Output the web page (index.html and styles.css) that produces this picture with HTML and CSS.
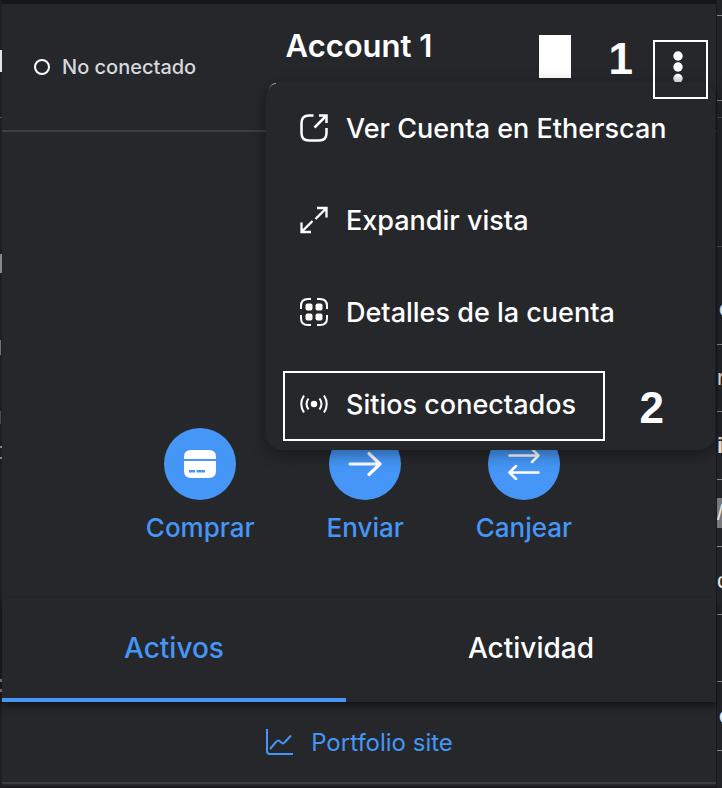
FILE: index.html
```html
<!DOCTYPE html>
<html lang="es">
<head>
<meta charset="utf-8">
<meta name="viewport" content="width=device-width, initial-scale=1">
<title>Account 1</title>
<link rel="stylesheet" href="styles.css">
</head>
<body>
<div class="page">
  <div class="edge-left"></div>
  <main class="wallet">
    <header class="header">
      <div class="status"><span class="ring"></span>No conectado</div>
      <h1 class="account">Account 1</h1>
      <div class="tools">
        <span class="blank"></span>
        <span class="step">1</span>
        <button class="more" type="button" aria-label="Opciones de la cuenta">
          <svg width="10" height="32" viewBox="0 0 10 32"><defs><linearGradient id="shade" x1="0" y1="0" x2="0" y2="1"><stop offset="0" stop-color="#fff"/><stop offset="1" stop-color="#c8c8c8"/></linearGradient></defs><g fill="#fff"><circle cx="5" cy="5" r="4.700"/><circle cx="5" cy="16" r="4.700"/></g><path fill="url(#shade)" d="M2 31A4.700 4.700 0 1 1 8 31Z"/></svg>
        </button>
      </div>
    </header>

    <nav class="menu">
      <button class="item" type="button">
        <svg class="icon" viewBox="0 0 28 28" fill="none" stroke="#fff" stroke-width="2.500"><path d="M13.500 1.500H9Q1.500 1.500 1.500 9V19Q1.500 26.500 9 26.500H19Q26.500 26.500 26.500 19V14M19 1.500H26.500V9M26 2L14.500 13.500"/></svg>
        Ver Cuenta en Etherscan
      </button>
      <button class="item" type="button">
        <svg class="icon" viewBox="0 0 28 28" fill="none" stroke="#fff" stroke-width="2.300"><path d="M17 2H26.500V11.500M26 2.500L15.500 13M11 26H1.500V16.500M2 25.500L12.500 15"/></svg>
        Expandir vista
      </button>
      <button class="item" type="button">
        <svg class="icon" viewBox="0 0 28 28" fill="none" stroke="#fff" stroke-width="2"><path d="M1 11V8Q1 1 8 1H11M17 1H20Q27 1 27 8V11M27 17V20Q27 27 20 27H17M11 27H8Q1 27 1 20V17"/><g fill="#fff" stroke="none"><rect x="5.500" y="5.500" width="7" height="7" rx="2"/><rect x="15.500" y="5.500" width="7" height="7" rx="2"/><rect x="5.500" y="15.500" width="7" height="7" rx="2"/><rect x="15.500" y="15.500" width="7" height="7" rx="2"/></g></svg>
        Detalles de la cuenta
      </button>
      <button class="item" type="button">
        <svg class="icon" viewBox="0 0 28 28" fill="none" stroke="#fff" stroke-width="2"><circle cx="14" cy="14" r="3.200" fill="#fff" stroke="none"/><path d="M8.500 8.500Q4.500 14 8.500 19.500M19.500 8.500Q23.500 14 19.500 19.500M4 5.500Q-1.500 14 4 22.500M24 5.500Q29.500 14 24 22.500"/></svg>
        Sitios conectados
      </button>
      <div class="highlight"></div>
      <span class="step step-two">2</span>
    </nav>

    <section class="overview">
      <div class="actions">
        <button class="action" type="button">
          <span class="disc"><svg width="32" height="28" viewBox="0 0 32 28" fill="#fff"><path d="M0 9V7Q0 0 7 0H25Q32 0 32 7V9Z"/><path fill-rule="evenodd" d="M0 11H32V21Q32 28 25 28H7Q0 28 0 21ZM5 20V22.500H11V20ZM12.500 20V22.500H21V20Z"/></svg></span>
          Comprar
        </button>
        <button class="action" type="button">
          <span class="disc"><svg width="34" height="26" viewBox="0 0 34 26" fill="none" stroke="#fff" stroke-width="3.200" stroke-linecap="round" stroke-linejoin="round"><path d="M2 13H32M21 2.500L32 13L21 23.500"/></svg></span>
          Enviar
        </button>
        <button class="action" type="button">
          <span class="disc"><svg width="32" height="32" viewBox="0 0 32 32" fill="none" stroke="#fff" stroke-width="2.500" stroke-linecap="round" stroke-linejoin="round"><path d="M1.500 7.500H30.500M24 1L30.500 7.500L24 14M30.500 24.500H1.500M8 18L1.500 24.500L8 31"/></svg></span>
          Canjear
        </button>
      </div>
    </section>

    <div class="tabs" role="tablist">
      <button class="tab active" type="button" role="tab" aria-selected="true">Activos</button>
      <button class="tab" type="button" role="tab" aria-selected="false">Actividad</button>
    </div>

    <footer class="footer">
      <a class="portfolio" href="#"><svg width="28" height="28" viewBox="0 0 28 28" fill="none" stroke="#4596f6" stroke-width="2"><path d="M2 1V23Q2 26 5 26H28M5 21L11 14Q13 11.500 15 13.500L17 15Q18.500 16 20 14L26 7.500"/></svg>Portfolio site</a>
    </footer>
  </main>
  <aside class="edge-right" aria-hidden="true">
    <div class="row r16"></div>
    <div class="row r85"></div>
    <div class="row r17 dim"></div>
    <div class="row r129 dim"></div>
    <div class="row r98 inset"><b>c</b></div>
    <div class="row r67">r</div>
    <div class="row r68"><b>i</b></div>
    <div class="row r67"><span class="chip">/</span></div>
    <div class="row r68">c</div>
    <div class="row r67"></div>
    <div class="row r69 inset"><b>c</b></div>
  </aside>
</div>
</body>
</html>
```
FILE: styles.css
```css
* {
  box-sizing: border-box;
}

body {
  margin: 0;
  background: #1d1e21;
  color: #fff;
  font-family: Inter, "Liberation Sans", sans-serif;
}

button {
  margin: 0;
  padding: 0;
  border: 0;
  background: none;
  color: inherit;
  font: inherit;
}

.page {
  display: grid;
  grid-template-columns: 2px minmax(0, 1fr) 6px;
  min-height: 100vh;
}

.edge-left {
  background:
    linear-gradient(#e4e4e4, #e4e4e4) 0 50px / 2px 22px no-repeat,
    linear-gradient(#55585c, #55585c) 0 117px / 2px 1px no-repeat,
    linear-gradient(#86888a, #86888a) 0 254px / 2px 19px no-repeat,
    linear-gradient(#707274, #707274) 0 340px / 1px 15px no-repeat,
    linear-gradient(#4c4e50, #4c4e50) 0 411px / 1px 13px no-repeat,
    linear-gradient(#86888a, #86888a) 0 446px / 2px 2px no-repeat,
    linear-gradient(#86888a, #86888a) 0 457px / 2px 2px no-repeat,
    linear-gradient(#86888a, #86888a) 0 679px / 2px 3px no-repeat,
    linear-gradient(#86888a, #86888a) 0 689px / 2px 3px no-repeat;
}

.wallet {
  position: relative;
  display: flex;
  flex-direction: column;
  border-top: 4px solid #151618;
  border-bottom: 2px solid #1b1b1f;
  background: #26272b;
}

.header {
  display: grid;
  grid-template-columns: 1fr auto 1fr;
  min-height: 128px;
  border-bottom: 2px solid #3b3e43;
}

.status {
  display: flex;
  align-items: center;
  gap: 12px;
  padding-left: 32px;
  color: #d6d9dc;
  font-size: 20px;
  font-weight: 500;
}

.ring {
  width: 16px;
  height: 16px;
  border: 2px solid #fff;
  border-radius: 50%;
}

.account {
  margin: 22px 0 0;
  font-size: 31px;
  line-height: 40px;
  font-weight: 600;
}

.tools {
  display: flex;
  justify-content: flex-end;
  align-items: flex-start;
  padding: 31px 8px 0 0;
}

.blank {
  width: 32px;
  height: 43px;
  margin-right: 38px;
  background: #fff;
}

.step {
  font: bold 44px/48px "Liberation Sans", sans-serif;
}

.more {
  position: relative;
  z-index: 3;
  display: flex;
  align-items: flex-start;
  width: 55px;
  height: 59px;
  margin: 5px 0 0 20px;
  padding: 9px 0 0 18px;
  border: 2px solid #fff;
}

.menu {
  position: absolute;
  z-index: 2;
  top: 78px;
  right: 1px;
  width: 449px;
  border-radius: 16px;
  background: #26272b;
  box-shadow: 0 4px 16px rgba(0, 0, 0, 0.4);
}

.menu::before {
  content: "";
  position: absolute;
  top: 1px;
  left: 3px;
  width: 7px;
  height: 7px;
  border-top: 1px solid #a0a1a3;
  border-top-left-radius: 7px;
}

.item {
  display: flex;
  align-items: center;
  gap: 18px;
  width: 100%;
  height: 92px;
  padding-left: 34px;
  font-size: 27px;
  font-weight: 500;
  text-align: left;
  white-space: nowrap;
}

.icon {
  flex: none;
  width: 28px;
  height: 28px;
}

.highlight {
  position: absolute;
  left: 17px;
  bottom: 9px;
  width: 322px;
  height: 70px;
  border: 2px solid #fff;
}

.step-two {
  position: absolute;
  right: 51px;
  bottom: 18px;
}

.overview {
  padding: 296px 0 52px;
}

.actions {
  display: flex;
  justify-content: center;
  gap: 72px;
}

.action {
  display: flex;
  flex-direction: column;
  align-items: center;
  gap: 10px;
  color: #4596f6;
  font-size: 26px;
  font-weight: 500;
  line-height: 36px;
}

.disc {
  display: grid;
  place-items: center;
  width: 72px;
  height: 72px;
  border-radius: 50%;
  background: #4596f6;
}

.tabs {
  display: flex;
  box-shadow: 0 4px 8px rgba(0, 0, 0, 0.5);
}

.tab {
  flex: 1 1 auto;
  height: 104px;
  border-bottom: 4px solid transparent;
  font-size: 28px;
  font-weight: 500;
}

.tab.active {
  border-color: #4596f6;
  color: #4596f6;
}

.footer {
  display: grid;
  place-items: center;
  height: 82px;
  border-bottom: 2px solid #3b3e43;
}

.portfolio {
  display: flex;
  align-items: center;
  gap: 18px;
  color: #4596f6;
  font-size: 24px;
  text-decoration: none;
}

.edge-right {
  overflow: hidden;
  border-left: 1px solid #18191b;
  background: #222327;
  color: #e8e8e8;
  font: 22px/24px "Liberation Sans", sans-serif;
}

.row {
  display: flex;
  align-items: center;
  border-bottom: 1px solid #85888c;
}

.dim {
  border-color: #45474b;
}

.inset {
  padding-left: 2px;
}

.r16 { height: 16px; }
.r17 { height: 17px; }
.r67 { height: 67px; }
.r68 { height: 68px; }
.r69 { height: 69px; }
.r85 { height: 85px; }
.r98 { height: 98px; padding-top: 26px; }
.r129 { height: 129px; }

.chip {
  padding: 3px 0;
  background: #77797b;
}
```
